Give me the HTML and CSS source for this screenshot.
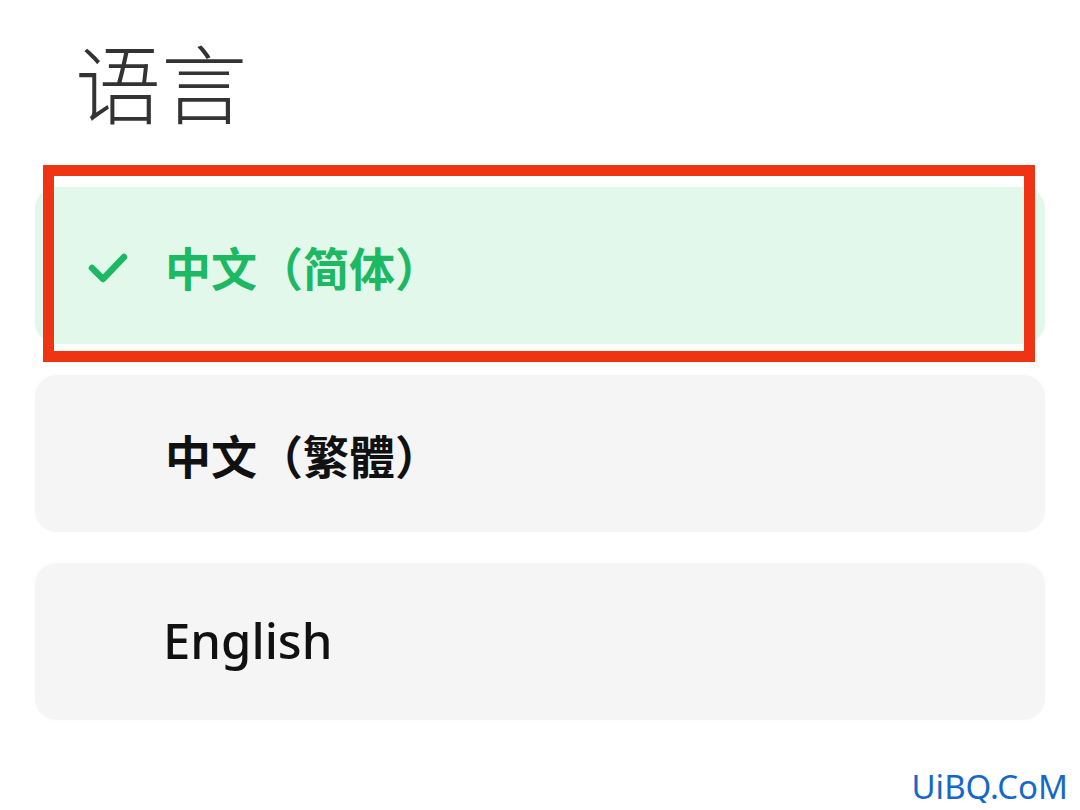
FILE: index.html
```html
<!DOCTYPE html>
<html lang="zh-CN">
<head>
	<meta charset="UTF-8">
	<meta name="viewport" content="width=device-width, initial-scale=1.0">
	<title>语言</title>
	<link rel="stylesheet" href="styles.css">
</head>
<body>
	<div class="page">
		<h1 class="title">语言</h1>

		<div class="options">
			<div class="option selected">
				<svg class="check" width="40" height="32" viewBox="0 0 40 32">
					<path d="M4 17 L15 28 L36 6" fill="none" stroke="#1cb862" stroke-width="6.5" stroke-linecap="round" stroke-linejoin="round"/>
				</svg>
				<span class="label">中文（简体）</span>
				<span class="highlight"></span>
			</div>
			<div class="option">
				<span class="label">中文（繁體）</span>
			</div>
			<div class="option">
				<span class="label en">English</span>
			</div>
		</div>
	</div>
	<div class="mark">UiBQ.CoM</div>
</body>
</html>
```

FILE: styles.css
```css
body {
	margin:0;
	background-color:#fff;
	font-family:"Noto Sans", "Noto Sans CJK SC", sans-serif;
}

.page {
	padding:0 35px;
}

.title {
	margin:0;
	padding:38px 0 0 40px;
	font-family:"Noto Sans CJK SC", sans-serif;
	font-size:86px;
	font-weight:300;
	line-height:1;
	color:#333;
}

.options {
	display:flex;
	flex-direction:column;
	gap:31px;
	margin-top:63px;
}

.option {
	position:relative;
	display:flex;
	align-items:center;
	height:157px;
	padding-left:130px;
	border-radius:22px;
	background-color:#f5f5f5;
	box-shadow:0 0 6px rgba(0,0,0,0.025);
}
.option.selected {
	padding-left:53px;
	background-color:#e2f8eb;
}

.check {
	display:block;
	margin-right:37px;
	margin-top:3px;
}

.label {
	font-family:"Noto Sans CJK SC", sans-serif;
	font-size:46px;
	font-weight:700;
	color:#111;
	margin-top:0;
}
.selected .label {
	color:#1cb862;
}
.label.en {
	font-family:"Noto Sans", sans-serif;
	font-size:49px;
	font-weight:500;
	margin-top:-4px;
	margin-left:-2px;
}

/* red annotation box over the first row */
.highlight {
	position:absolute;
	top:-22px;
	bottom:-18px;
	left:8px;
	right:10px;
	border:11px solid #ef3414;
	pointer-events:none;
}

.mark {
	text-align:right;
	padding:50px 12px 0 0;
	font-family:"Noto Sans", sans-serif;
	font-size:33px;
	line-height:1;
	color:#1667c9;
}
```
